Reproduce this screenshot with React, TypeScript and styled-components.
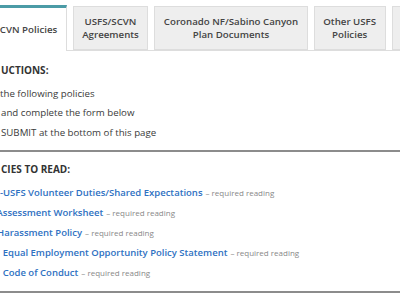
import styled, { createGlobalStyle } from "styled-components";

const GlobalStyle = createGlobalStyle`
    html, body {
        margin: 0;
        padding: 0;
        overflow: hidden;
        background: #fff;
    }
    body {
        font-family: "Open Sans", "Liberation Sans", sans-serif;
        color: #3a3a3a;
    }
`;

const tabs = [
    { label: ["SCVN Policies"], active: true },
    { label: ["USFS/SCVN", "Agreements"] },
    { label: ["Coronado NF/Sabino Canyon", "Plan Documents"] },
    { label: ["Other USFS", "Policies"] },
    { label: ["Volunteer", "Forms"] },
];

const instructions = [
    { text: "the following policies", indent: 0 },
    { text: "and complete the form below", indent: 1 },
    { text: "SUBMIT at the bottom of this page", indent: 1 },
];

const policies = [
    { title: "-USFS Volunteer Duties/Shared Expectations", indent: 0 },
    { title: "Assessment Worksheet", indent: -3.5 },
    { title: "Harassment Policy", indent: -3 },
    { title: "Equal Employment Opportunity Policy Statement", indent: 2.7 },
    { title: "Code of Conduct", indent: 2.7 },
];

export default function App() {
    return (
        <Page>
            <GlobalStyle />
            <TabStrip>
                {tabs.map((t) => (
                    <Tab key={t.label.join(" ")} $active={!!t.active}>
                        {t.label.map((l) => (
                            <span key={l}>{l}</span>
                        ))}
                    </Tab>
                ))}
            </TabStrip>
            <Content>
                <Heading $indent={1}>UCTIONS:</Heading>
                <List>
                    {instructions.map((i) => (
                        <Line key={i.text} $indent={i.indent}>
                            {i.text}
                        </Line>
                    ))}
                </List>
                <Rule />
                <Heading $indent={1}>CIES TO READ:</Heading>
                <List>
                    {policies.map((p) => (
                        <LinkLine key={p.title} $indent={p.indent}>
                            <a href="#">{p.title}</a>
                            <small>– required reading</small>
                        </LinkLine>
                    ))}
                </List>
                <Rule />
            </Content>
        </Page>
    );
}

const Page = styled.div`
    width: 400px;
    height: 300px;
    overflow: hidden;
`;

const TabStrip = styled.div`
    display: flex;
    align-items: flex-end;
    gap: 6px;
    height: 50px;
    margin-left: -15px;
    border-bottom: 1px solid #dddddd;
`;

const Tab = styled.div<{ $active: boolean }>`
    flex: none;
    box-sizing: border-box;
    display: flex;
    flex-direction: column;
    justify-content: center;
    align-items: center;
    padding: 0 8.5px;
    height: ${(p) => (p.$active ? "46px" : "44px")};
    margin-bottom: ${(p) => (p.$active ? "-1px" : "0")};
    background: ${(p) => (p.$active ? "#ffffff" : "#eeeeee")};
    border: 1px solid #dddddd;
    border-bottom: ${(p) => (p.$active ? "none" : "1px solid #dddddd")};
    border-top: ${(p) => (p.$active ? "3px solid #4b9ba6" : "1px solid #dddddd")};
    font-size: 9.7px;
    font-weight: 600;
    line-height: 13px;
    color: #444444;
    text-align: center;
    white-space: nowrap;
    & span {
        display: block;
    }
`;

const Content = styled.div`
    padding-top: 10px;
`;

const Heading = styled.div<{ $indent: number }>`
    margin-left: ${(p) => p.$indent}px;
    font-size: 10px;
    font-weight: 700;
    line-height: 19px;
    color: #333333;
`;

const List = styled.div`
    display: flex;
    flex-direction: column;
    margin-top: 4px;
`;

const Line = styled.div<{ $indent: number }>`
    margin-left: ${(p) => p.$indent}px;
    font-size: 9.7px;
    line-height: 19.3px;
    color: #3a3a3a;
    white-space: nowrap;
`;

const LinkLine = styled.div<{ $indent: number }>`
    margin-left: ${(p) => p.$indent}px;
    font-size: 9.5px;
    line-height: 20px;
    white-space: nowrap;
    & a {
        color: #2e71c2;
        font-weight: 600;
        text-decoration: none;
    }
    & small {
        margin-left: 3px;
        font-size: 8px;
        line-height: 1;
        color: #888888;
    }
`;

const Rule = styled.div`
    height: 2px;
    margin: 8px 0 8px;
    background: #8c8c8c;
`;
